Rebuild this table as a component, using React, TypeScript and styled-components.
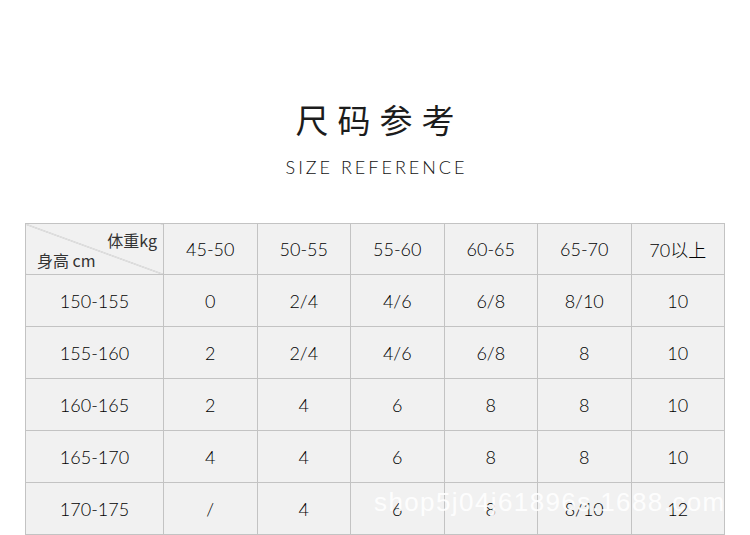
import React from 'react';
import styled, { createGlobalStyle } from 'styled-components';

const weights = ['45-50', '50-55', '55-60', '60-65', '65-70', '70以上'];

const rows: { height: string; sizes: string[] }[] = [
  { height: '150-155', sizes: ['0', '2/4', '4/6', '6/8', '8/10', '10'] },
  { height: '155-160', sizes: ['2', '2/4', '4/6', '6/8', '8', '10'] },
  { height: '160-165', sizes: ['2', '4', '6', '8', '8', '10'] },
  { height: '165-170', sizes: ['4', '4', '6', '8', '8', '10'] },
  { height: '170-175', sizes: ['/', '4', '6', '8', '8/10', '12'] },
];

const App: React.FC = () => {
  return (
    <>
      <GlobalStyle />
      <Page>
        <Heading>
          <Title>尺码参考</Title>
          <Subtitle>SIZE REFERENCE</Subtitle>
        </Heading>
        <TableWrap>
          <Table>
            <thead>
              <HeadRow>
                <CornerCell>
                  <CornerTop>体重kg</CornerTop>
                  <CornerBottom>身高 cm</CornerBottom>
                </CornerCell>
                {weights.map((w) => (
                  <Cell key={w}>{w}</Cell>
                ))}
              </HeadRow>
            </thead>
            <tbody>
              {rows.map((row) => (
                <tr key={row.height}>
                  <FirstCell>{row.height}</FirstCell>
                  {row.sizes.map((s, i) => (
                    <Cell key={`${row.height}_${i}`}>{s}</Cell>
                  ))}
                </tr>
              ))}
            </tbody>
          </Table>
          <Watermark>shop5j04j61896s.1688.com</Watermark>
        </TableWrap>
      </Page>
    </>
  );
};

const GlobalStyle = createGlobalStyle`
  html, body {
    margin: 0;
    padding: 0;
    background: #ffffff;
  }
  body {
    font-family: 'Lato', 'Noto Sans CJK SC', sans-serif;
    color: #222;
  }
`;

const Page = styled.div`
  width: 750px;
  height: 535px;
  overflow: hidden;
  display: flex;
  flex-direction: column;
  align-items: center;
`;

const Heading = styled.header`
  display: flex;
  flex-direction: column;
  align-items: center;
  padding-top: 97px;
  height: 125px;
  box-sizing: border-box;
`;

const Title = styled.h1`
  margin: 0;
  font-family: 'Noto Sans CJK SC', sans-serif;
  font-weight: 400;
  font-size: 33px;
  line-height: 44px;
  letter-spacing: 9px;
  margin-right: -9px;
  color: #1c1c1c;
`;

const Subtitle = styled.div`
  margin-top: 15px;
  font-family: 'Lato', sans-serif;
  font-weight: 300;
  font-size: 18px;
  line-height: 22px;
  letter-spacing: 3px;
  margin-right: -3px;
  color: #111;
`;

const TableWrap = styled.div`
  position: relative;
  margin-top: 98px;
  align-self: flex-start;
  padding-left: 25px;
`;

const Table = styled.table`
  border-collapse: collapse;
  width: 700px;
  table-layout: fixed;
  background: #f1f1f1;

  td,
  th {
    border: 1px solid #c3c3c3;
    height: 52px;
    padding: 0;
    box-sizing: border-box;
  }
`;

const HeadRow = styled.tr`
  td {
    height: 51px;
  }
`;

const Cell = styled.td`
  text-align: center;
  font-family: 'Lato', 'Noto Sans CJK SC', sans-serif;
  font-weight: 300;
  font-size: 18px;
  color: #000;
`;

const FirstCell = styled(Cell)`
  width: 138px;
`;

const CornerCell = styled.td`
  width: 138px;
  position: relative;
  background: linear-gradient(
    to top right,
    transparent calc(50% - 0.6px),
    #b5b5b5 50%,
    transparent calc(50% + 0.6px)
  );
  font-family: 'Noto Sans CJK SC', sans-serif;
  font-size: 16px;
  color: #333;
`;

const CornerTop = styled.div`
  position: absolute;
  top: 6px;
  right: 6px;
  line-height: 20px;
`;

const CornerBottom = styled.div`
  position: absolute;
  bottom: 4px;
  left: 11px;
  line-height: 20px;
`;

const Watermark = styled.div`
  position: absolute;
  left: 374px;
  top: 264px;
  font-family: 'Liberation Sans', sans-serif;
  font-size: 26px;
  letter-spacing: 1.4px;
  color: rgba(255, 255, 255, 0.92);
  white-space: nowrap;
  pointer-events: none;
`;

export default App;
